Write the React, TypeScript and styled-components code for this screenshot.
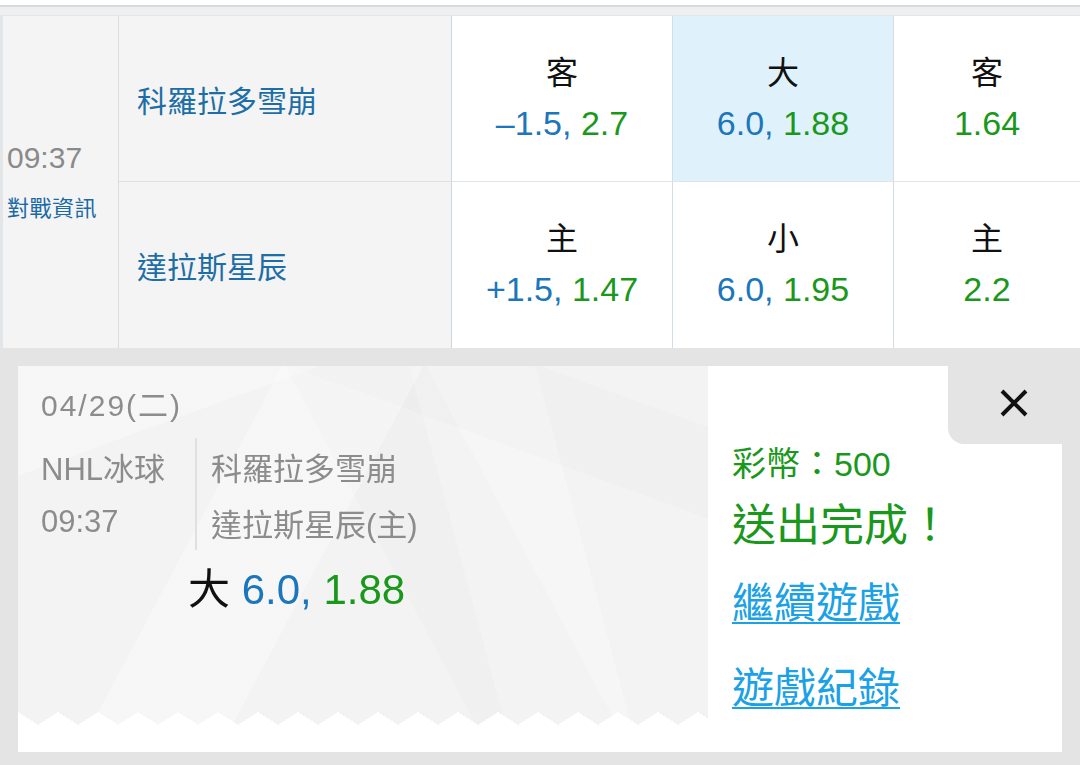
import React from "react";
import styled, { createGlobalStyle } from "styled-components";

const GlobalStyle = createGlobalStyle`
  html, body {
    margin: 0;
    padding: 0;
    background: #e4e4e4;
  }
  body {
    font-family: "Liberation Sans", "Noto Sans CJK TC", sans-serif;
  }
  * {
    box-sizing: border-box;
  }
`;

const Page = styled.div`
  width: 1080px;
  height: 765px;
  overflow: hidden;
  display: flex;
  flex-direction: column;
  background: #e4e4e4;
`;

const TopWhite = styled.div`
  height: 5px;
  background: #ffffff;
`;

const TopBand = styled.div`
  height: 11px;
  background: #edeff1;
  border-top: 2px solid #d6dade;
  border-bottom: 1px solid #e3e5e7;
`;

const Board = styled.div`
  display: grid;
  grid-template-columns: 116px 333px 221px 221px 1fr;
  grid-template-rows: 166px 166px;
  border-left: 3px solid #e2e6e9;
`;

const TimeCell = styled.div`
  grid-row: 1 / span 2;
  display: flex;
  flex-direction: column;
  justify-content: center;
  gap: 20px;
  padding: 0 0 0 4px;
  background: #f4f4f4;
  border-right: 1px solid #dcdcdc;
`;

const KickOff = styled.div`
  font-size: 30px;
  line-height: 34px;
  color: #8a8a8a;
`;

const InfoLink = styled.div`
  font-size: 22px;
  line-height: 28px;
  color: #1c6aa5;
  letter-spacing: 0.5px;
`;

const TeamCell = styled.div<{ $last?: boolean }>`
  display: flex;
  align-items: center;
  padding-left: 18px;
  background: #f4f4f4;
  border-right: 1px solid #cdd7df;
  border-bottom: ${(p) => (p.$last ? "none" : "1px solid #e0e0e0")};
  font-size: 30px;
  color: #1d6ea6;
`;

const OddsCell = styled.div<{ $active?: boolean; $last?: boolean; $edge?: boolean }>`
  display: flex;
  flex-direction: column;
  align-items: center;
  justify-content: center;
  background: ${(p) => (p.$active ? "#dff2fb" : "#ffffff")};
  border-right: ${(p) => (p.$edge ? "none" : "1px solid #d2dde6")};
  border-bottom: ${(p) => (p.$last ? "none" : "1px solid #e0e5e9")};
`;

const OddsLabel = styled.div`
  font-size: 32px;
  line-height: 36px;
  color: #111111;
`;

const OddsValue = styled.div`
  margin-top: 12px;
  font-size: 34px;
  line-height: 40px;
  white-space: nowrap;
`;

const Blue = styled.span`
  color: #1b76bc;
`;

const Green = styled.span`
  color: #1a981b;
`;

const Overlay = styled.div`
  flex: 1;
  padding: 18px 18px 13px 18px;
`;

const Panel = styled.div`
  height: 386px;
  display: grid;
  grid-template-columns: 690px 1fr;
  background: #ffffff;
`;

const Ticket = styled.div`
  height: 359px;
  padding: 20px 0 0 23px;
  background:
    linear-gradient(118deg, rgba(255,255,255,0) 0 30%, rgba(255,255,255,0.3) 30% 46%, rgba(255,255,255,0) 46%),
    linear-gradient(62deg, rgba(0,0,0,0) 0 52%, rgba(0,0,0,0.012) 52% 68%, rgba(0,0,0,0) 68%),
    linear-gradient(160deg, rgba(255,255,255,0.3) 0 18%, rgba(255,255,255,0) 18%),
    linear-gradient(20deg, rgba(0,0,0,0) 0 75%, rgba(0,0,0,0.012) 75% 90%, rgba(0,0,0,0) 90%),
    linear-gradient(75deg, rgba(255,255,255,0) 0 62%, rgba(255,255,255,0.25) 62% 78%, rgba(255,255,255,0) 78%),
    #f3f3f3;
  -webkit-mask:
    linear-gradient(#000, #000) top left / 100% calc(100% - 13px) no-repeat,
    conic-gradient(from -57deg at 50% 100%, #000 114deg, transparent 0) bottom left / 40px 13px repeat-x;
  mask:
    linear-gradient(#000, #000) top left / 100% calc(100% - 13px) no-repeat,
    conic-gradient(from -57deg at 50% 100%, #000 114deg, transparent 0) bottom left / 40px 13px repeat-x;
`;

const DateLine = styled.div`
  font-size: 30px;
  line-height: 40px;
  color: #8c8c8c;
  letter-spacing: 2px;
`;

const MatchInfo = styled.div`
  margin-top: 12px;
  display: grid;
  grid-template-columns: 154px 1fr;
`;

const LabelCol = styled.div`
  display: flex;
  flex-direction: column;
`;

const TeamsCol = styled.div`
  display: flex;
  flex-direction: column;
  padding-left: 14px;
  border-left: 2px solid #e0e0e0;
`;

const InfoRow = styled.div<{ $size: number }>`
  height: 56px;
  display: flex;
  align-items: center;
  font-size: ${(p) => p.$size}px;
  color: #8c8c8c;
  white-space: nowrap;
`;

const Pick = styled.div`
  margin-top: 16px;
  padding-left: 147px;
  font-size: 42px;
  line-height: 48px;
  color: #111111;
  white-space: nowrap;
`;

const Result = styled.div`
  display: flex;
  flex-direction: column;
`;

const CloseRow = styled.div`
  display: flex;
  justify-content: flex-end;
`;

const CloseTab = styled.button`
  width: 114px;
  height: 78px;
  border: 0;
  padding: 0 0 4px 18px;
  display: flex;
  align-items: center;
  justify-content: center;
  background: #e4e4e4;
  border-bottom-left-radius: 16px;
  cursor: pointer;
`;

const Body = styled.div`
  padding-left: 24px;
  display: flex;
  flex-direction: column;
`;

const Coins = styled.div`
  font-size: 34px;
  line-height: 40px;
  color: #1a981b;
  white-space: nowrap;
`;

const Done = styled.div`
  margin-top: 15px;
  font-size: 44px;
  line-height: 54px;
  color: #1a981b;
  white-space: nowrap;
`;

const ActionLink = styled.a<{ $gap: number }>`
  margin-top: ${(p) => p.$gap}px;
  font-size: 42px;
  line-height: 48px;
  color: #1ba1e6;
  text-decoration: underline;
  text-decoration-thickness: 2px;
  text-underline-offset: 4px;
  white-space: nowrap;
  align-self: flex-start;
  cursor: pointer;
`;

const rows = [
  {
    team: "科羅拉多雪崩",
    handicap: { label: "客", line: "–1.5,", odds: "2.7" },
    total: { label: "大", line: "6.0,", odds: "1.88" },
    money: { label: "客", odds: "1.64" },
  },
  {
    team: "達拉斯星辰",
    handicap: { label: "主", line: "+1.5,", odds: "1.47" },
    total: { label: "小", line: "6.0,", odds: "1.95" },
    money: { label: "主", odds: "2.2" },
  },
];

export default function App() {
  return (
    <Page>
      <GlobalStyle />
      <TopWhite />
      <TopBand />
      <Board>
        <TimeCell>
          <KickOff>09:37</KickOff>
          <InfoLink>對戰資訊</InfoLink>
        </TimeCell>
        {rows.map((r, i) => {
          const last = i === rows.length - 1;
          return (
            <React.Fragment key={r.team}>
              <TeamCell $last={last}>{r.team}</TeamCell>
              <OddsCell $last={last}>
                <OddsLabel>{r.handicap.label}</OddsLabel>
                <OddsValue>
                  <Blue>{r.handicap.line}</Blue> <Green>{r.handicap.odds}</Green>
                </OddsValue>
              </OddsCell>
              <OddsCell $last={last} $active={i === 0}>
                <OddsLabel>{r.total.label}</OddsLabel>
                <OddsValue>
                  <Blue>{r.total.line}</Blue> <Green>{r.total.odds}</Green>
                </OddsValue>
              </OddsCell>
              <OddsCell $last={last} $edge>
                <OddsLabel>{r.money.label}</OddsLabel>
                <OddsValue>
                  <Green>{r.money.odds}</Green>
                </OddsValue>
              </OddsCell>
            </React.Fragment>
          );
        })}
      </Board>
      <Overlay>
        <Panel>
          <Ticket>
            <DateLine>04/29(二)</DateLine>
            <MatchInfo>
              <LabelCol>
                <InfoRow $size={31}>NHL冰球</InfoRow>
                <InfoRow $size={31}>09:37</InfoRow>
              </LabelCol>
              <TeamsCol>
                <InfoRow $size={31}>科羅拉多雪崩</InfoRow>
                <InfoRow $size={31}>達拉斯星辰(主)</InfoRow>
              </TeamsCol>
            </MatchInfo>
            <Pick>
              大 <Blue>6.0,</Blue> <Green>1.88</Green>
            </Pick>
          </Ticket>
          <Result>
            <CloseRow>
              <CloseTab aria-label="close">
                <svg width="28" height="28" viewBox="0 0 28 28">
                  <path d="M2 2 L26 26 M26 2 L2 26" stroke="#111" strokeWidth="4" fill="none" />
                </svg>
              </CloseTab>
            </CloseRow>
            <Body>
              <Coins>彩幣：500</Coins>
              <Done>送出完成！</Done>
              <ActionLink $gap={27}>繼續遊戲</ActionLink>
              <ActionLink $gap={37}>遊戲紀錄</ActionLink>
            </Body>
          </Result>
        </Panel>
      </Overlay>
    </Page>
  );
}
